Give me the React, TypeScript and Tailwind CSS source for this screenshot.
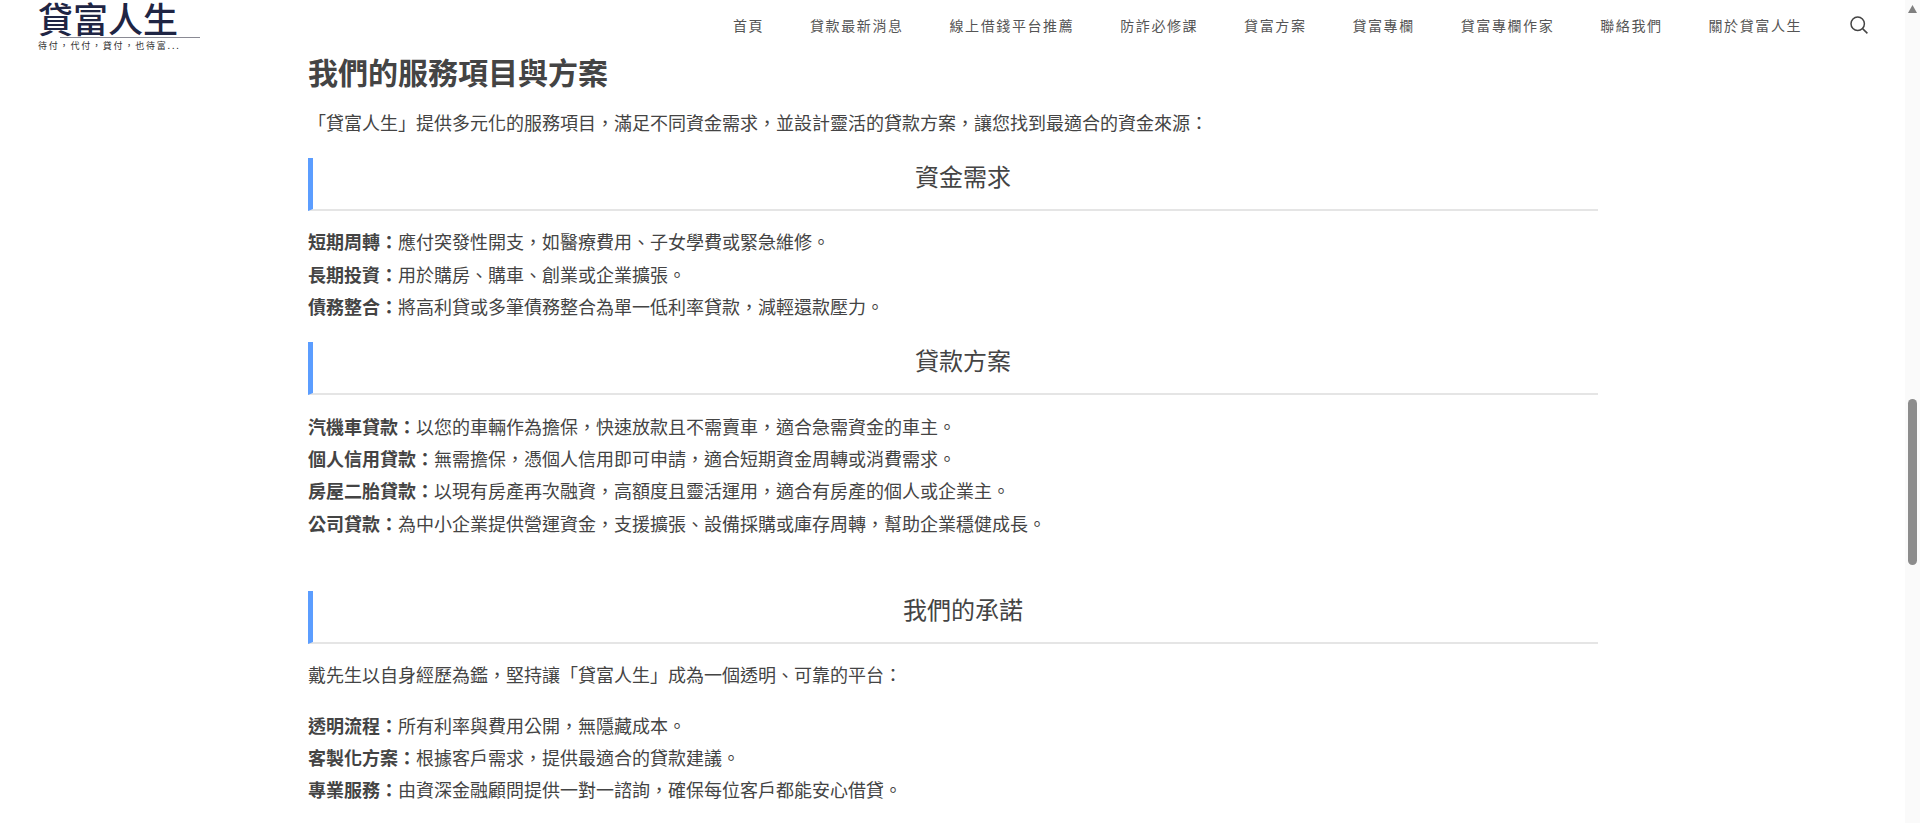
const Row = ({ b, t }: { b: string; t: string }) => (
  <li className="h-[32.4px] leading-[32.4px]">
    <strong className="font-bold">{b}：</strong>
    {t}
  </li>
);

const Heading = ({ children, className }: { children: string; className: string }) => (
  <h3 className={`h-[53px] border-l-[5px] border-b-2 border-l-[#5b9dff] border-b-[#e5e5e5] pl-[15px] pb-[15px] text-center text-[24px] leading-[36px] font-normal ${className}`}>
    {children}
  </h3>
);

const nav = ["首頁", "貸款最新消息", "線上借錢平台推薦", "防詐必修課", "貸富方案", "貸富專欄", "貸富專欄作家", "聯絡我們", "關於貸富人生"];

export default function App() {
  return (
    <div className="flex h-[823px] w-full overflow-hidden bg-white text-[#444444] [font-family:'Noto_Sans_CJK_TC','Noto_Sans',sans-serif]">
      <div className="min-w-0 flex-1">
        <header className="flex h-[47px] items-start">
          <div className="ml-[38px] w-[162px] shrink-0">
            <div className="h-[37px] text-[35px] leading-[35px] font-medium text-[#1f2544]">貸富人生</div>
            <div className="ml-[22px] h-px bg-[#8a8a94]" />
            <div className="mt-[2px] text-[9px] leading-[11px] tracking-[1.8px] text-[#333]">待付，代付，貸付，也待富...</div>
          </div>
          <nav className="ml-auto mr-[37px] flex h-[50px] items-center gap-[45.9px] text-[14px] tracking-[1.6px] text-[#555]">
            {nav.map((n) => (
              <span key={n}>{n}</span>
            ))}
            <svg className="ml-[2px] h-[18px] w-[18px]" viewBox="0 0 18 18" fill="none" stroke="#444" strokeWidth="1.5">
              <circle cx="7.7" cy="7.7" r="6.7" />
              <path d="M12.6 12.6 17.4 17.4" />
            </svg>
          </nav>
        </header>
        <main className="ml-[308px] w-[1290px] text-[18px]">
          <h2 className="h-[48px] text-[30px] leading-[48px] font-bold">我們的服務項目與方案</h2>
          <p className="mt-[11px] h-[32.4px] leading-[32.4px]">「貸富人生」提供多元化的服務項目，滿足不同資金需求，並設計靈活的貸款方案，讓您找到最適合的資金來源：</p>
          <Heading className="mt-[19.6px]">資金需求</Heading>
          <ul className="mt-[14.4px]">
            <Row b="短期周轉" t="應付突發性開支，如醫療費用、子女學費或緊急維修。" />
            <Row b="長期投資" t="用於購房、購車、創業或企業擴張。" />
            <Row b="債務整合" t="將高利貸或多筆債務整合為單一低利率貸款，減輕還款壓力。" />
          </ul>
          <Heading className="mt-[19px]">貸款方案</Heading>
          <ul className="mt-[15px]">
            <Row b="汽機車貸款" t="以您的車輛作為擔保，快速放款且不需賣車，適合急需資金的車主。" />
            <Row b="個人信用貸款" t="無需擔保，憑個人信用即可申請，適合短期資金周轉或消費需求。" />
            <Row b="房屋二胎貸款" t="以現有房產再次融資，高額度且靈活運用，適合有房產的個人或企業主。" />
            <Row b="公司貸款" t="為中小企業提供營運資金，支援擴張、設備採購或庫存周轉，幫助企業穩健成長。" />
          </ul>
          <Heading className="mt-[52px]">我們的承諾</Heading>
          <p className="mt-[14px] h-[32.4px] leading-[32.4px]">戴先生以自身經歷為鑑，堅持讓「貸富人生」成為一個透明、可靠的平台：</p>
          <ul className="mt-[18px]">
            <Row b="透明流程" t="所有利率與費用公開，無隱藏成本。" />
            <Row b="客製化方案" t="根據客戶需求，提供最適合的貸款建議。" />
            <Row b="專業服務" t="由資深金融顧問提供一對一諮詢，確保每位客戶都能安心借貸。" />
          </ul>
        </main>
      </div>
      <div className="flex h-full w-[15px] shrink-0 flex-col items-center bg-[#fafafa]">
        <svg className="mt-[5px] h-[8px] w-[9px]" viewBox="0 0 9 8" fill="#7f7f7f">
          <path d="M4.5 0 9 8H0Z" />
        </svg>
        <div className="mt-[386px] h-[166px] w-[9px] rounded-full bg-[#8c8c8c]" />
      </div>
    </div>
  );
}
